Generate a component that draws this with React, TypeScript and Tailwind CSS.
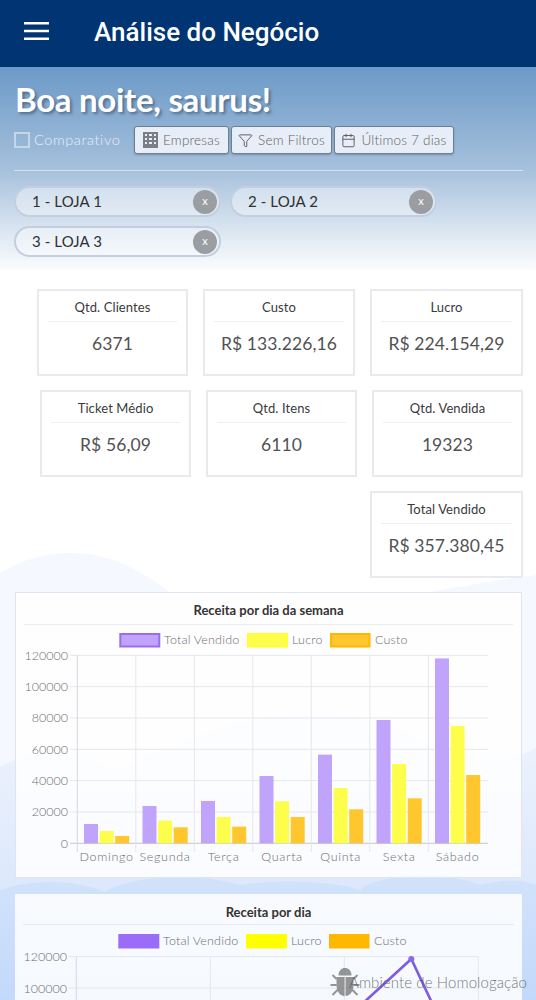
import { Filter, Calendar } from "lucide-react";

const font = "[font-family:Lato,'Open_Sans',sans-serif]";

function Kpi({ title, value, w }: { title: string; value: string; w: string }) {
  return (
    <div className={`${w} h-[87px] border-2 border-[#e9eaed] bg-white/70 px-[9px] pt-[6px] text-center`}>
      <div className="h-[25px] border-b border-[#eeeff1] text-[13px] leading-[20px] tracking-[0.1px] text-[#3a3a3c]">{title}</div>
      <div className="mt-[9px] whitespace-nowrap text-[17.5px] leading-[26px] tracking-[0.1px] text-[#525254]">{value}</div>
    </div>
  );
}

function Chip({ label }: { label: string }) {
  return (
    <div className="flex h-[31px] w-[207px] items-center justify-between rounded-full border-2 border-[#c3cfdf] bg-white/40 pl-[16px] pr-[2px]">
      <span className="text-[15px] tracking-[0.1px] text-[#2d3136]">{label}</span>
      <span className="flex h-[24px] w-[24px] items-center justify-center rounded-full bg-[#9a9ea3] text-[11px] text-white">x</span>
    </div>
  );
}

function ToolButton({ w, icon, label }: { w: string; icon: React.ReactNode; label: string }) {
  return (
    <button className={`${w} flex h-[28px] items-center justify-center gap-[5px] rounded-[3px] border border-[#6e7f92] bg-[#e8eef7] text-[13.5px] font-light tracking-[0.2px] text-[#5d6167] shadow-[0_1px_2px_rgba(40,60,90,.35)]`}>
      {icon}
      <span>{label}</span>
    </button>
  );
}

function Legend({ fills }: { fills: { bg: string; stroke: string; x: number; w: number; tx: number; t: string }[] }) {
  return (
    <>
      {fills.map((f) => (
        <g key={f.t}>
          <rect x={f.x + 1} y={1} width={f.w - 2} height={12.5} fill={f.bg} stroke={f.stroke} strokeWidth={2} />
          <text x={f.tx} y={10.5} fontSize={12.5} fontWeight={300} fill="#6e6e70" letterSpacing={0.2}>{f.t}</text>
        </g>
      ))}
    </>
  );
}

const week = ["Domingo", "Segunda", "Terça", "Quarta", "Quinta", "Sexta", "Sábado"];
const data = [
  [12340, 7870, 4680],
  [23830, 14470, 10210],
  [27020, 16800, 10640],
  [42980, 26800, 16800],
  [56600, 35300, 21700],
  [78700, 50600, 28700],
  [118000, 74900, 43600],
];
const ticks = [120000, 100000, 80000, 60000, 40000, 20000, 0];
const barColors = ["#c0a3fb", "#fdfd4c", "#ffc62e"];

function WeekChart() {
  const x0 = 77.3, step = 58.5, yTop = 655.3, y0 = 843.3;
  const sy = (v: number) => y0 - (v / 120000) * (y0 - yTop);
  return (
    <svg viewBox="17 633 503 232" className="block h-[232px] w-[503px]" fontFamily="Lato, sans-serif">
      <g transform="translate(0 633)">
        <Legend
          fills={[
            { bg: "#c0a3fb", stroke: "#9a6cf0", x: 119.3, w: 41, tx: 164, t: "Total Vendido" },
            { bg: "#fdfd4c", stroke: "#ffff33", x: 247, w: 41, tx: 292, t: "Lucro" },
            { bg: "#ffc62e", stroke: "#ffb800", x: 330, w: 40.5, tx: 375, t: "Custo" },
          ]}
        />
      </g>
      {ticks.map((t) => (
        <g key={t}>
          <line x1={70} x2={488} y1={sy(t)} y2={sy(t)} stroke={t === 0 ? "#c4c6cc" : "#e6e7ec"} strokeWidth={1} />
          <text x={68} y={sy(t) + 4.5} textAnchor="end" fontSize={12.5} fontWeight={300} fill="#6e6e70">{t}</text>
        </g>
      ))}
      {week.map((d, i) => (
        <g key={d}>
          <line x1={x0 + i * step} x2={x0 + i * step} y1={yTop} y2={852} stroke={i === 0 ? "#d6d8de" : "#e6e7ec"} />
          <text x={x0 + step / 2 + i * step} y={861} textAnchor="middle" fontSize={12.5} fontWeight={300} fill="#6e6e70" letterSpacing={0.7}>{d}</text>
          {data[i].map((v, j) => (
            <rect key={j} x={x0 + 6.7 + i * step + j * 15.6} y={sy(v)} width={14} height={y0 - sy(v)} fill={barColors[j]} />
          ))}
        </g>
      ))}
    </svg>
  );
}

function DayChart() {
  const vs = [77.3, 211.3, 345.3, 479.3];
  return (
    <svg viewBox="17 933 503 72" className="block h-[72px] w-[503px]" fontFamily="Lato, sans-serif">
      <g transform="translate(0 934)">
        <Legend
          fills={[
            { bg: "#9a6cf7", stroke: "#9a6cf7", x: 119.3, w: 41, tx: 164, t: "Total Vendido" },
            { bg: "#ffff00", stroke: "#ffff00", x: 247, w: 41, tx: 292, t: "Lucro" },
            { bg: "#ffb800", stroke: "#ffb800", x: 330, w: 40.5, tx: 375, t: "Custo" },
          ]}
        />
      </g>
      {[956.7, 988].map((y, i) => (
        <g key={y}>
          <line x1={70} x2={479.3} y1={y} y2={y} stroke="#e6e7ec" />
          <text x={68} y={y + 4.5} textAnchor="end" fontSize={12.5} fontWeight={300} fill="#6e6e70">{ticks[i]}</text>
        </g>
      ))}
      {vs.map((x, i) => (
        <line key={x} x1={x} x2={x} y1={956.7} y2={1005} stroke={i === 0 ? "#d6d8de" : "#e6e7ec"} />
      ))}
      <polyline points="362,1005 412.3,959 434,1005" fill="none" stroke="#7d5ce2" strokeWidth={2.6} />
      <circle cx={412.3} cy={959} r={3} fill="#8a68ea" />
    </svg>
  );
}

function BugMark() {
  return (
    <svg viewBox="0 0 30 30" className="h-[30px] w-[30px] shrink-0" fill="currentColor" stroke="currentColor">
      <path stroke="none" d="M8.500 8.500C8.500 3.500 11.500 1 15 1s6.500 2.500 6.500 7.500z" />
      <path stroke="none" d="M6.500 10h8v19C9.500 28.500 6.500 24 6.500 18z M15.500 10h8v8c0 6-3 10.500-8 11z" />
      <path fill="none" strokeWidth="2" d="M6.500 12L2.500 8M6.500 18H0.500M7.500 23L2.500 28M23.500 12L27.500 8M23.500 18h6M22.500 23l5 5" />
    </svg>
  );
}

export default function App() {
  return (
    <div className={`relative h-[1000px] w-[536px] overflow-hidden bg-white ${font}`}>
      {/* decorative wave background */}
      <svg className="absolute inset-0 h-[1000px] w-[536px]" viewBox="0 0 536 1000" aria-hidden="true">
        <defs>
          <linearGradient id="waveB" gradientUnits="userSpaceOnUse" x1="0" y1="745" x2="0" y2="1000">
            <stop offset="0" stopColor="#ecf2fd" />
            <stop offset="1" stopColor="#cfe0fb" />
          </linearGradient>
          <linearGradient id="waveC" gradientUnits="userSpaceOnUse" x1="0" y1="875" x2="0" y2="1000">
            <stop offset="0" stopColor="#d2e2fb" />
            <stop offset="1" stopColor="#c3d9fb" />
          </linearGradient>
        </defs>
        <path d="M0 573 C20 560 45 553 70 553 C110 553 140 570 170 592 L430 592 C470 585 510 578 536 575 L536 1000 L0 1000 Z" fill="#f5f8fe" />
        <path d="M0 767 C30 750 60 750 120 770 C200 730 300 690 400 730 C450 760 500 770 536 748 L536 1000 L0 1000 Z" fill="url(#waveB)" />
        <path d="M0 890 C30 880 70 878 105 892 C130 875 200 872 240 885 C280 878 340 882 360 890 C380 872 450 872 480 885 C500 880 520 878 536 885 L536 1000 L0 1000 Z" fill="url(#waveC)" />
      </svg>

      <div className="relative">
        <header className="flex h-[67px] items-center bg-[#013473] pl-[24px] shadow-[0_1px_3px_rgba(0,0,0,.25)]">
          <svg viewBox="0 0 25 18" className="-mt-[6px] h-[18px] w-[25px]" stroke="white" strokeWidth="2.4" aria-hidden="true">
            <path d="M0 1.200H25M0 9H25M0 16.800H25" />
          </svg>
          <h1 className="-mt-[2px] ml-[45px] text-[26px] font-medium text-white [font-family:Roboto,sans-serif]">Análise do Negócio</h1>
        </header>

        <section className="h-[203px] bg-[linear-gradient(180deg,#6c9ac7_0%,#a5c0dc_50%,#dde7f2_82%,#fbfcfe_100%)] px-[14px] pt-[12px]">
          <h2 className="h-[42px] pl-[1px] text-[33px] font-bold leading-[40px] tracking-[-0.3px] text-white [text-shadow:2px_2px_3px_rgba(50,70,100,.6)]">Boa noite, saurus!</h2>
          <div className="mt-[5px] flex items-center">
            <span className="h-[16px] w-[16px] border-2 border-[#c5d6e8]" />
            <span className="ml-[4px] w-[100px] text-[14.5px] font-light tracking-[0.6px] text-[#e6eef7]">Comparativo</span>
            <div className="flex gap-[2px]">
              <ToolButton
                w="w-[95px]"
                label="Empresas"
                icon={
                  <svg viewBox="0 0 15 16" className="h-[16px] w-[15px]" fill="#7b7f85">
                    <path fillRule="evenodd" d="M0 0h15v16H0z M2 2v2h2V2z M6 2v2h3V2z M11 2v2h2V2z M2 6v2h2V6z M6 6v2h3V6z M11 6v2h2V6z M2 10v2h2v-2z M6 10v2h3v-2z M11 10v2h2v-2z" />
                  </svg>
                }
              />
              <ToolButton w="w-[101px]" label="Sem Filtros" icon={<Filter className="h-[15px] w-[15px]" strokeWidth={1.6} />} />
              <ToolButton w="w-[120px]" label="Últimos 7 dias" icon={<Calendar className="h-[15px] w-[15px]" strokeWidth={1.6} />} />
            </div>
          </div>
          <div className="mt-[16px] w-[509px] border-t border-[#d5e2f0]" />
          <div className="mt-[15px] flex flex-wrap gap-x-[9px] gap-y-[9px]">
            <Chip label="1 - LOJA 1" />
            <Chip label="2 - LOJA 2" />
            <Chip label="3 - LOJA 3" />
          </div>
        </section>

        <section className="flex flex-wrap justify-end gap-x-[15px] gap-y-[14px] pl-[15px] pr-[13px] pt-[19px]">
          <Kpi w="w-[151px]" title="Qtd. Clientes" value="6371" />
          <Kpi w="w-[152px]" title="Custo" value="R$ 133.226,16" />
          <Kpi w="w-[153px]" title="Lucro" value="R$ 224.154,29" />
          <Kpi w="w-[151px]" title="Ticket Médio" value="R$ 56,09" />
          <Kpi w="w-[151px]" title="Qtd. Itens" value="6110" />
          <Kpi w="w-[151px]" title="Qtd. Vendida" value="19323" />
          <Kpi w="w-[153px]" title="Total Vendido" value="R$ 357.380,45" />
        </section>

        <section className="ml-[15px] mt-[14px] flex w-[507px] flex-col gap-[16px]">
          <div className="h-[286px] border border-[#dfe4ee] bg-white/85 px-[1px] pt-[8px]">
            <div className="mx-[7px] h-[24px] border-b border-[#e8ebf1] text-center text-[13px] font-bold leading-[18px] text-[#333]">Receita por dia da semana</div>
            <div className="mt-[8px]"><WeekChart /></div>
          </div>
          <div className="h-[120px] bg-white/85 px-[1px] pt-[9px]">
            <div className="mx-[7px] h-[22px] border-b border-[#e8ebf1] text-center text-[13px] font-bold leading-[18px] text-[#333]">Receita por dia</div>
            <div className="mt-[8px]"><DayChart /></div>
          </div>
        </section>
      </div>

      {/* floating environment watermark */}
      <div className="absolute left-[330px] top-[967px] flex h-[30px] items-center text-[#6a6a6a]/70">
        <BugMark />
        <span className="-ml-[11px] whitespace-nowrap text-[15px] font-light tracking-[0.1px] text-[#555]/80">Ambiente de Homologação</span>
      </div>
    </div>
  );
}
